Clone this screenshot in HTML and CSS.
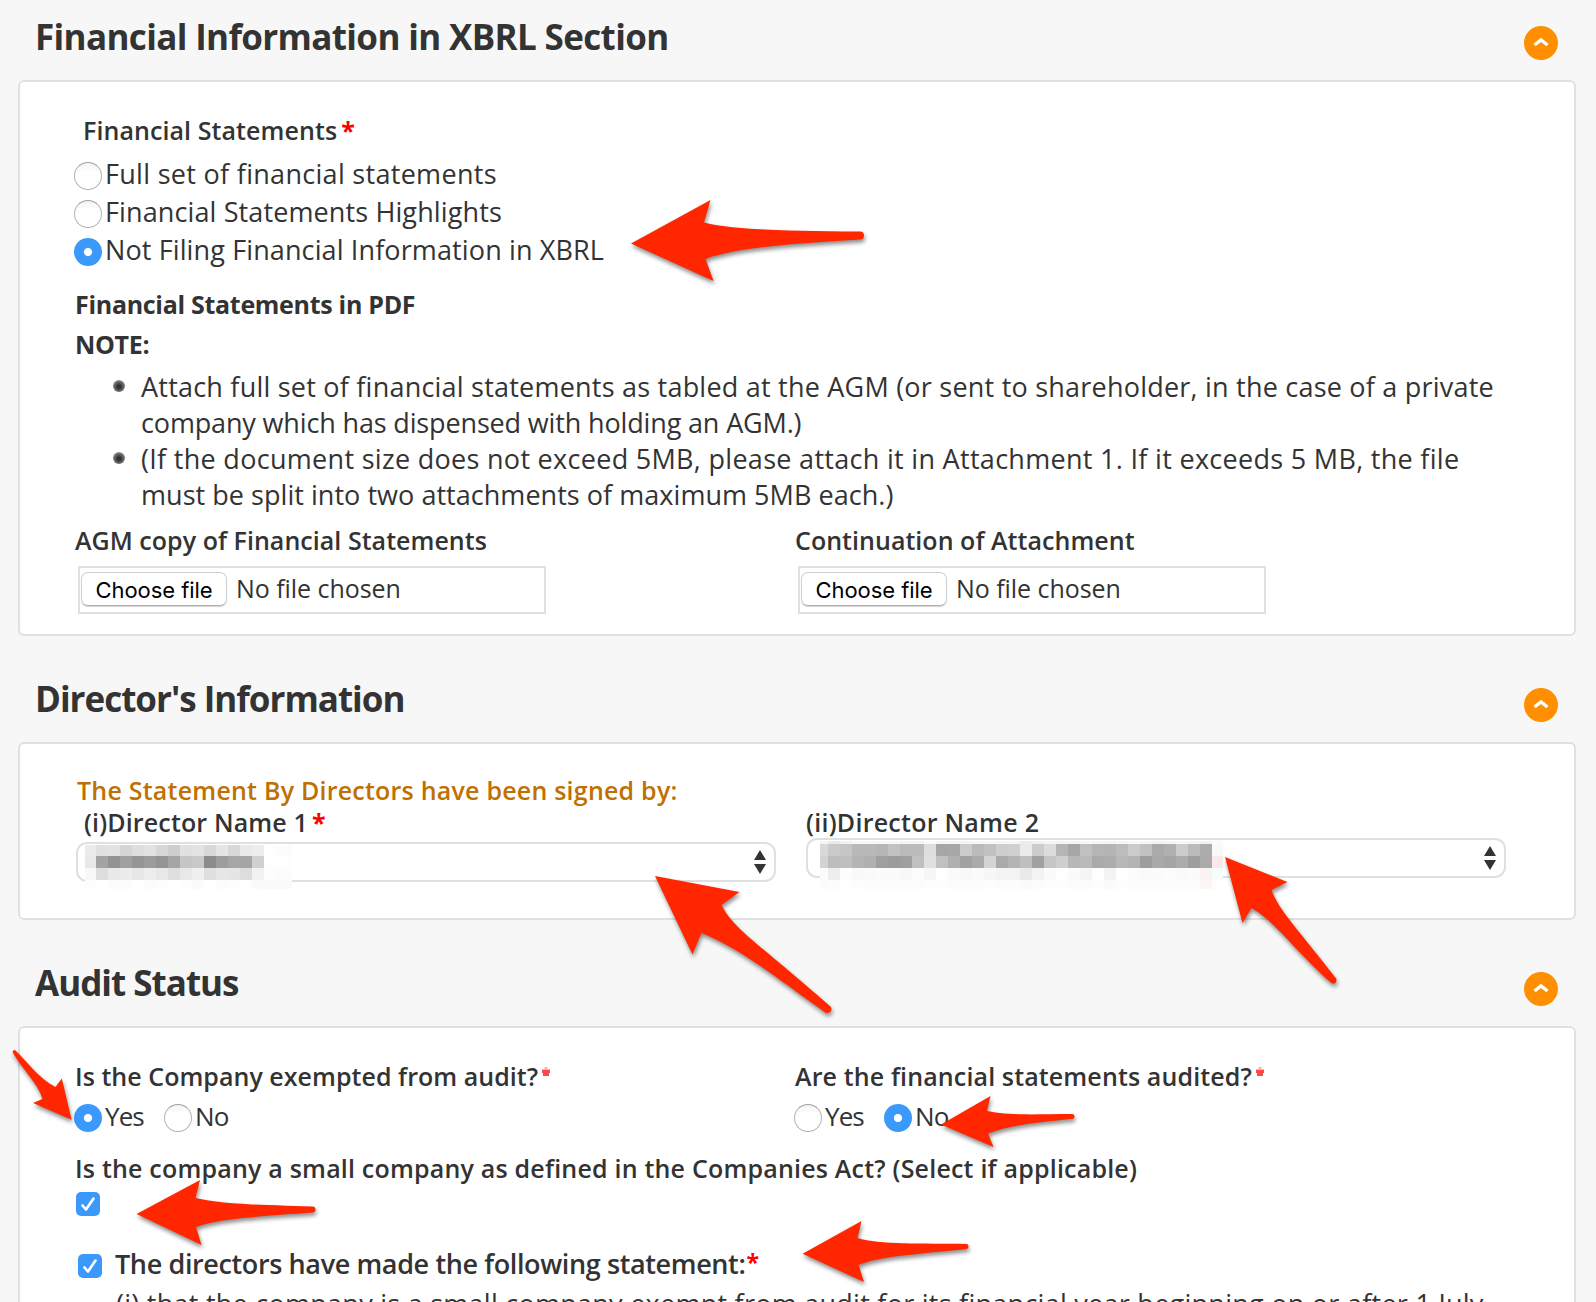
FILE: index.html
```html
<!DOCTYPE html>
<html lang="en">
<head>
<meta charset="utf-8">
<title>Annual Return</title>
<link rel="stylesheet" href="styles.css">
</head>
<body>
<main class="page">
  <section class="section">
    <header class="section-head">
      <h2>Financial Information in XBRL Section</h2>
      <span class="toggle"><svg viewBox="0 0 34 34"><path d="M10.500 19 17 14l6.500 5"/></svg></span>
    </header>
    <div class="panel panel-xbrl">
      <p class="label label-inset">Financial Statements<span class="req">*</span></p>
      <div class="radio-list">
        <label class="choice"><i class="radio"></i><span class="opt-full">Full set of financial statements</span></label>
        <label class="choice"><i class="radio"></i><span>Financial Statements Highlights</span></label>
        <label class="choice"><i class="radio on"></i><span>Not Filing Financial Information in XBRL</span></label>
      </div>
      <p class="strong">Financial Statements in PDF</p>
      <p class="strong note">NOTE:</p>
      <ul class="notes">
        <li>Attach full set of financial statements as tabled at the AGM (or sent to shareholder, in the case of a private<br><span class="tight">company which has dispensed with holding an AGM.)</span></li>
        <li><span class="wide">(If the document size does not exceed 5MB, please attach it in Attachment 1. If it exceeds 5 MB, the file</span><br><span class="medium">must be split into two attachments of maximum 5MB each.)</span></li>
      </ul>
      <div class="columns files">
        <div>
          <p class="label">AGM copy of Financial Statements</p>
          <div class="file"><span class="file-button">Choose file</span><span>No file chosen</span></div>
        </div>
        <div>
          <p class="label">Continuation of Attachment</p>
          <div class="file"><span class="file-button">Choose file</span><span>No file chosen</span></div>
        </div>
      </div>
    </div>
  </section>

  <section class="section">
    <header class="section-head">
      <h2 class="h-directors">Director's Information</h2>
      <span class="toggle"><svg viewBox="0 0 34 34"><path d="M10.500 19 17 14l6.500 5"/></svg></span>
    </header>
    <div class="panel panel-directors">
      <p class="label lead">The Statement By Directors have been signed by:</p>
      <div class="directors">
        <div>
          <p class="label label-one">(i)Director Name 1<span class="req">*</span></p>
          <div class="select select-one">
            <svg class="mosaic mosaic-one" id="name-one" width="207" height="44"></svg>
            <svg class="updown" viewBox="0 0 12 24"><path d="M6 0l6 10H0zM0 14h12L6 24z"/></svg>
          </div>
        </div>
        <div>
          <p class="label label-two">(ii)Director Name 2</p>
          <div class="select">
            <svg class="mosaic mosaic-two" id="name-two" width="403" height="48"></svg>
            <svg class="updown" viewBox="0 0 12 24"><path d="M6 0l6 10H0zM0 14h12L6 24z"/></svg>
          </div>
        </div>
      </div>
    </div>
  </section>

  <section class="section">
    <header class="section-head">
      <h2 class="h-audit">Audit Status</h2>
      <span class="toggle"><svg viewBox="0 0 34 34"><path d="M10.500 19 17 14l6.500 5"/></svg></span>
    </header>
    <div class="panel panel-audit">
      <div class="columns">
        <div>
          <p class="label">Is the Company exempted from audit?<svg class="star" viewBox="0 0 10 10"><path class="halo" d="M5 0v9M1 3.500h8"/><path d="M1 4.500h8M2 7.500h6M5 3v5"/></svg></p>
          <div class="answers">
            <label class="choice"><i class="radio on"></i><span>Yes</span></label>
            <label class="choice"><i class="radio"></i><span>No</span></label>
          </div>
        </div>
        <div>
          <p class="label label-audited">Are the financial statements audited?<svg class="star" viewBox="0 0 10 10"><path class="halo" d="M5 0v9M1 3.500h8"/><path d="M1 4.500h8M2 7.500h6M5 3v5"/></svg></p>
          <div class="answers">
            <label class="choice"><i class="radio"></i><span>Yes</span></label>
            <label class="choice"><i class="radio on"></i><span>No</span></label>
          </div>
        </div>
      </div>
      <p class="label small-company">Is the company a small company as defined in the Companies Act? (Select if applicable)</p>
      <span class="check"><svg viewBox="0 0 24 24"><path d="M6.500 13.500 10 17.500 17.500 6.500"/></svg></span>
      <div class="statement">
        <span class="check"><svg viewBox="0 0 24 24"><path d="M6.500 13.500 10 17.500 17.500 6.500"/></svg></span>
        <span class="statement-text">The directors have made the following statement:</span><span class="req">*</span>
      </div>
      <p class="clause">(i) that the company is a small company exempt from audit for its financial year beginning on or after 1 July</p>
    </div>
  </section>
</main>

<svg class="arrows" viewBox="0 0 1596 1302">
  <path d="M631 243.500 710.500 200 704 222.500C735 230 785 231 860 231.500a4 4 0 0 1 0 8C785 244 735 248 705.500 259L713.500 281Z"/>
  <path d="M655 876 739.500 892 721.500 905C733 929 761 945 831 1007q2 6-5 6C782 982 740 948 701.500 933L692.500 954.500Z"/>
  <path d="M1225 857 1287.500 882 1271.500 890C1279 911 1299 930 1336.500 979q0 6-5 4C1298 954 1276 922 1251.500 908L1242.500 923Z"/>
  <path d="M71.600 1119.700 61.800 1078.500 55.500 1087C40 1079 30 1065 15 1050q-3 0-2 3C23 1070 39 1085 42.500 1099L33 1103Z"/>
  <path d="M136.600 1214 200 1180 195.500 1198C220 1204 260 1205 312.500 1206.500a2.800 2.800 0 0 1 0 6C265 1216 220 1218 196 1227L201.500 1245Z"/>
  <path d="M941 1124.500 990.500 1096 987 1111C1010 1116 1040 1114 1072 1114a2.500 2.500 0 0 1 0 5C1040 1122 1010 1125 988 1133.500L993.500 1147Z"/>
  <path d="M802.600 1253.700 861.500 1221 857.500 1238C880 1245 920 1243 967 1244a2.800 2.800 0 0 1 0 5C920 1254 880 1256 858.500 1265L864 1282Z"/>
</svg>
<script src="mosaic.js"></script>
</body>
</html>
```
FILE: styles.css
```css
* { box-sizing: border-box; }
body {
  margin: 0;
  height: 1302px;
  overflow: hidden;
  background: #f7f7f7;
  color: #333;
  font-family: "Open Sans", "Noto Sans", sans-serif;
  font-size: 27px;
}
p, h2, ul { margin: 0; padding: 0; white-space: nowrap; }
.page { height: 1302px; overflow: hidden; position: relative; }
.section + .section { margin-top: 26px; }
.section-head {
  height: 80px;
  padding: 0 38px 0 35px;
  display: flex;
  justify-content: space-between;
}
h2 { font-size: 35px; font-weight: 700; line-height: 73px; letter-spacing: -0.65px; }
.h-directors { letter-spacing: -1px; }
.h-audit { letter-spacing: -1px; }
.toggle {
  width: 34px;
  height: 34px;
  margin-top: 26px;
  border-radius: 50%;
  background: #ff8f00;
}
.toggle svg { display: block; width: 34px; height: 34px; fill: none; stroke: #fff; stroke-width: 3.4; }

.panel {
  margin: 0 20px 0 18px;
  padding: 30px 0 0 55px;
  border: 2px solid #e0e0e0;
  border-radius: 6px;
  background: #fff;
}
.panel-xbrl { height: 556px; }
.panel-directors { height: 178px; }
.panel-audit { height: 400px; }

.label { font-size: 25px; font-weight: 600; line-height: 36px; letter-spacing: 0.04px; }
.label-inset { padding-left: 8px; letter-spacing: 0.08px; }
.req { color: #f00; font-weight: 700; margin-left: 4px; }

.radio-list { margin-top: 9px; letter-spacing: 0.12px; }
.radio-list .choice { height: 38px; }
.opt-full { letter-spacing: 0.3px; }
.choice { display: flex; align-items: center; gap: 3px; margin-left: -1px; }
.choice span { line-height: 32px; padding-bottom: 5px; }
.radio {
  flex: none;
  width: 28px;
  height: 28px;
  border-radius: 50%;
  border: 1px solid #b4b4b4;
  border-top-color: #a2a2a2;
  background: linear-gradient(#f4f4f4, #fff 35%);
}
.radio.on {
  border: 0;
  background: radial-gradient(circle, #fff 0 3.6px, #3b99fc 4.5px);
}

.strong { font-size: 25px; font-weight: 700; line-height: 36px; margin-top: 15px; letter-spacing: -0.3px; }
.note { margin-top: 4px; }

.notes { margin-top: 7px; list-style: none; line-height: 36px; letter-spacing: 0.22px; }
.notes li { position: relative; padding-left: 66px; }
.notes li::before {
  content: "";
  position: absolute;
  left: 38px;
  top: 11px;
  width: 12px;
  height: 12px;
  border-radius: 50%;
  background: radial-gradient(circle at 50% 55%, #333 0 20%, #777 60%, #d8d8d8 100%);
}
.tight { letter-spacing: -0.15px; }
.wide { letter-spacing: 0.3px; }
.medium { letter-spacing: 0.04px; }

.columns { display: grid; grid-template-columns: 720px 1fr; }
.files { margin-top: 9px; }
.file {
  width: 468px;
  height: 48px;
  margin: 8px 0 0 3px;
  padding: 4px 0 0 1px;
  border: 2px solid #e0e0e0;
  display: flex;
  gap: 9px;
  font-size: 25px;
  line-height: 33px;
  letter-spacing: -0.05px;
}
.file-button {
  width: 146px;
  height: 34px;
  border: 1px solid #cfcfcf;
  border-bottom-color: #b0b0b0;
  border-radius: 7px;
  box-shadow: 0 1px 1px rgba(0, 0, 0, .18);
  color: #000;
  text-align: center;
  font: 400 22px/35px Inter, sans-serif;
  letter-spacing: -0.05px;
}

.panel-directors .label { line-height: 32px; }
.panel-directors { padding-left: 56px; }
.lead { color: #c07000; letter-spacing: 0.22px; padding-left: 1px; }
.directors { display: grid; grid-template-columns: 730px 1fr; }
.label-one { padding-left: 8px; letter-spacing: 0.15px; }
.label-two { letter-spacing: 0.26px; }
.select {
  position: relative;
  width: 700px;
  height: 40px;
  border: 2px solid #e0e0e0;
  border-radius: 11px;
  padding: 6px 8px 0 0;
  display: flex;
  justify-content: flex-end;
}
.select-one { margin-top: 4px; }
.updown { width: 12px; height: 24px; fill: #333; }
.mosaic { position: absolute; }
.mosaic-one { left: 7px; top: 1px; }
.mosaic-two { left: 12px; top: 1px; }

.answers { display: grid; grid-template-columns: 90px auto; justify-content: start; margin-top: 10px; }
.answers .choice { height: 28px; font-size: 26px; letter-spacing: -0.9px; }
.star { width: 10px; height: 10px; margin-left: 3px; vertical-align: 9px; fill: none; stroke: #ff4a4a; stroke-width: 3; }
.star .halo { stroke: #ffb0b0; }
.label-audited { letter-spacing: 0.13px; }
.small-company { margin-top: 18px; letter-spacing: 0.2px; }
.check {
  flex: none;
  display: block;
  width: 24px;
  height: 24px;
  border-radius: 5px;
  background: #3b99fc;
}
.small-company + .check { margin: 6px 0 0 1px; }
.check svg { display: block; fill: none; stroke: #fff; stroke-width: 2.6; stroke-linecap: round; stroke-linejoin: round; }
.statement {
  display: flex;
  align-items: center;
  height: 36px;
  margin-top: 32px;
  padding-left: 3px;
  font-size: 27px;
  font-weight: 600;
  line-height: 36px;
}
.statement-text { margin-left: 13px; letter-spacing: -0.38px; padding-bottom: 4px; }
.statement .req { margin-left: 1px; padding-bottom: 8px; font-size: 23px; }
.clause { margin-top: 2px; padding-left: 41px; line-height: 36px; letter-spacing: 0.26px; }

.arrows {
  position: absolute;
  left: 0;
  top: 0;
  width: 1596px;
  height: 1302px;
  fill: #ff2600;
  pointer-events: none;
}
.arrows path { filter: drop-shadow(1px 3px 2px rgba(0, 0, 0, .45)); }
```
FILE: mosaic.js
```js
// Pixelated director names: each row is a top, a height and one grey level (hex) per cell.
function mosaic(id, edges, rows) {
  var svg = document.getElementById(id), out = "";
  rows.forEach(function (row) {
    row[2].split(" ").forEach(function (g, i) {
      var c = g.length === 6 ? g : g + g + g;
      out += '<rect x="' + edges[i] + '" y="' + row[0] + '" width="' + (edges[i + 1] - edges[i]) +
        '" height="' + row[1] + '" fill="#' + c + '"/>';
    });
  });
  svg.setAttribute("shape-rendering", "crispEdges");
  svg.innerHTML = out;
}

function steps(first, width, count, tail) {
  var e = [0];
  for (var i = 0; i <= count; i++) e.push(first + width * i);
  return e.concat(tail);
}

mosaic("name-one", steps(11, 12, 15, [207]), [
  [0, 11, "eb e1 e2 d6 de e2 d7 ce e1 e3 d8 e5 d8 e9 ed fe fc"],
  [11, 12, "e8 a3 93 a0 95 9c 94 a5 c5 c9 8c 9d a6 a5 d0 fe fe"],
  [23, 12, "f8 dd e9 ec e7 ed e8 df e8 f0 df e6 e5 dd f2 fd fc"],
  [35, 9, "fd ff fc fc ff fc fd ff fd fb ff fc fd fe fb fa fa"]
]);

mosaic("name-two", steps(8, 12, 32, [403]), [
  [0, 3, "f6 ea f2 f8 f8 f8 f7 f4 f4 fa f5 f6 f4 f7 f8 f6 f7 ec f1 f6 f4 f4 f7 f5 f4 f6 f9 f6 f4 f4 f7 f6 f2 fb"],
  [3, 12, "d9 ca c6 b9 b9 b6 c2 bb bb de a6 a7 cb bb c1 ce d0 eb cc dc b5 a7 c0 b5 b4 bc cb c1 aa b0 cc bb ac f9"],
  [15, 12, "d3 bd bf b4 b0 9f 9c 9f c0 e0 c0 b0 a1 ab d4 aa b4 bf a1 c6 cf b7 ba aa ad b8 b4 9d a9 a5 ac 9e ab f9e9e9"],
  [27, 12, "fb ee fd f9 fa fb fb f8 fc f7 fe fa f8 fb f7 f4 f3 ea f3 fb fe fb f5 fe f3 fe fc fa fb fc fa fb fbf3f2 f5fefd"],
  [39, 9, "fb fc fe fd fc fc fc fc fc fd fd fc fc fc fd fc fc fb fc fd fd fc fc fd fb fd fc fc fc fc fc fc fcf6f5 fe"]
]);
```
